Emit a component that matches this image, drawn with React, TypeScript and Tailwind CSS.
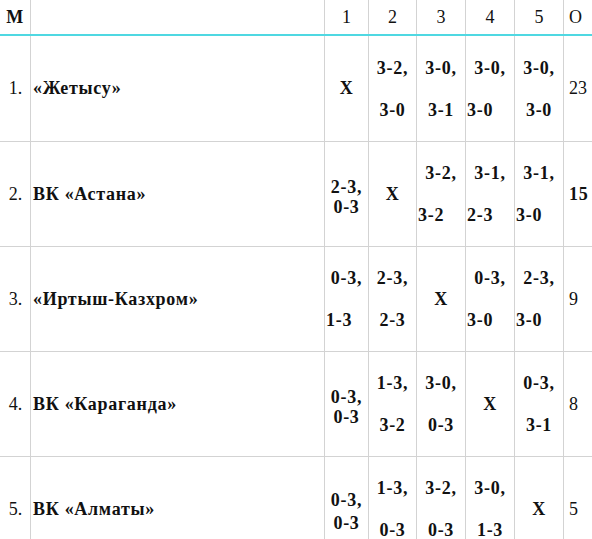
import React from "react";

type Score = { a: string; b: string; left?: boolean; tight?: "a" | "b" } | "X";

interface Team {
  place: string;
  name: string;
  scores: Score[];
  points: string;
  boldPoints?: boolean;
}

const teams: Team[] = [
  {
    place: "1.",
    name: "«Жетысу»",
    scores: [
      "X",
      { a: "3-2,", b: "3-0" },
      { a: "3-0,", b: "3-1" },
      { a: "3-0,", b: "3-0", left: true },
      { a: "3-0,", b: "3-0" },
    ],
    points: "23",
  },
  {
    place: "2.",
    name: "ВК «Астана»",
    scores: [
      { a: "2-3,", b: "0-3", tight: "a" },
      "X",
      { a: "3-2,", b: "3-2", left: true },
      { a: "3-1,", b: "2-3", left: true },
      { a: "3-1,", b: "3-0", left: true },
    ],
    points: "15",
    boldPoints: true,
  },
  {
    place: "3.",
    name: "«Иртыш-Казхром»",
    scores: [
      { a: "0-3,", b: "1-3", left: true },
      { a: "2-3,", b: "2-3" },
      "X",
      { a: "0-3,", b: "3-0", left: true },
      { a: "2-3,", b: "3-0", left: true },
    ],
    points: "9",
  },
  {
    place: "4.",
    name: "ВК «Караганда»",
    scores: [
      { a: "0-3,", b: "0-3", tight: "a" },
      { a: "1-3,", b: "3-2" },
      { a: "3-0,", b: "0-3" },
      "X",
      { a: "0-3,", b: "3-1" },
    ],
    points: "8",
  },
  {
    place: "5.",
    name: "ВК «Алматы»",
    scores: [
      { a: "0-3,", b: "0-3", tight: "b" },
      { a: "1-3,", b: "0-3" },
      { a: "3-2,", b: "0-3" },
      { a: "3-0,", b: "1-3" },
      "X",
    ],
    points: "5",
  },
];

const cols = "grid grid-cols-[30px_294px_44px_48px_49px_49px_49px_40px]";
const bold = "font-bold tracking-[0.7px]";

function ScoreCell({ s }: { s: Score }) {
  if (s === "X") {
    return (
      <div className={`flex items-center justify-center border-l border-[#d3d3d3] ${bold}`}>
        X
      </div>
    );
  }
  const spacing =
    s.tight === "a" ? "gap-0 pt-[6px]" : s.tight === "b" ? "gap-[3px] pt-[4px]" : "gap-[22px]";
  return (
    <div
      className={`flex flex-col justify-center border-l border-[#d3d3d3] px-[1px] leading-[20px] ${bold} ${spacing}`}
    >
      <div className="text-center">{s.a}</div>
      <div className={s.left ? "text-left" : "text-center"}>{s.b}</div>
    </div>
  );
}

export default function App() {
  return (
    <div className="w-[592px] h-[539px] overflow-hidden bg-white text-[18px] text-[#111] font-['Liberation_Serif','Times_New_Roman',serif]">
      {/* header */}
      <div className={`${cols} h-[36px] border-b-2 border-[#4fd8e2]`}>
        <div className={`flex items-center justify-center ${bold}`}>M</div>
        <div className="border-l border-[#d3d3d3]" />
        {["1", "2", "3", "4", "5"].map((n) => (
          <div key={n} className="flex items-center justify-center border-l border-[#d3d3d3]">
            {n}
          </div>
        ))}
        <div className="flex items-center border-l border-[#d3d3d3] pl-[5px]">O</div>
      </div>

      {teams.map((t, idx) => (
        <div
          key={t.place}
          className={`${cols} ${idx === 0 ? "h-[106px]" : "h-[105px]"} border-b border-[#d3d3d3]`}
        >
          <div className="flex items-center justify-center pl-[1px]">{t.place}</div>
          <div className={`flex items-center border-l border-[#d3d3d3] pl-[2px] ${bold}`}>
            {t.name}
          </div>
          {t.scores.map((s, i) => (
            <ScoreCell key={i} s={s} />
          ))}
          <div
            className={`flex items-center border-l border-[#d3d3d3] pl-[5px] ${
              t.boldPoints ? bold : ""
            }`}
          >
            {t.points}
          </div>
        </div>
      ))}
    </div>
  );
}
